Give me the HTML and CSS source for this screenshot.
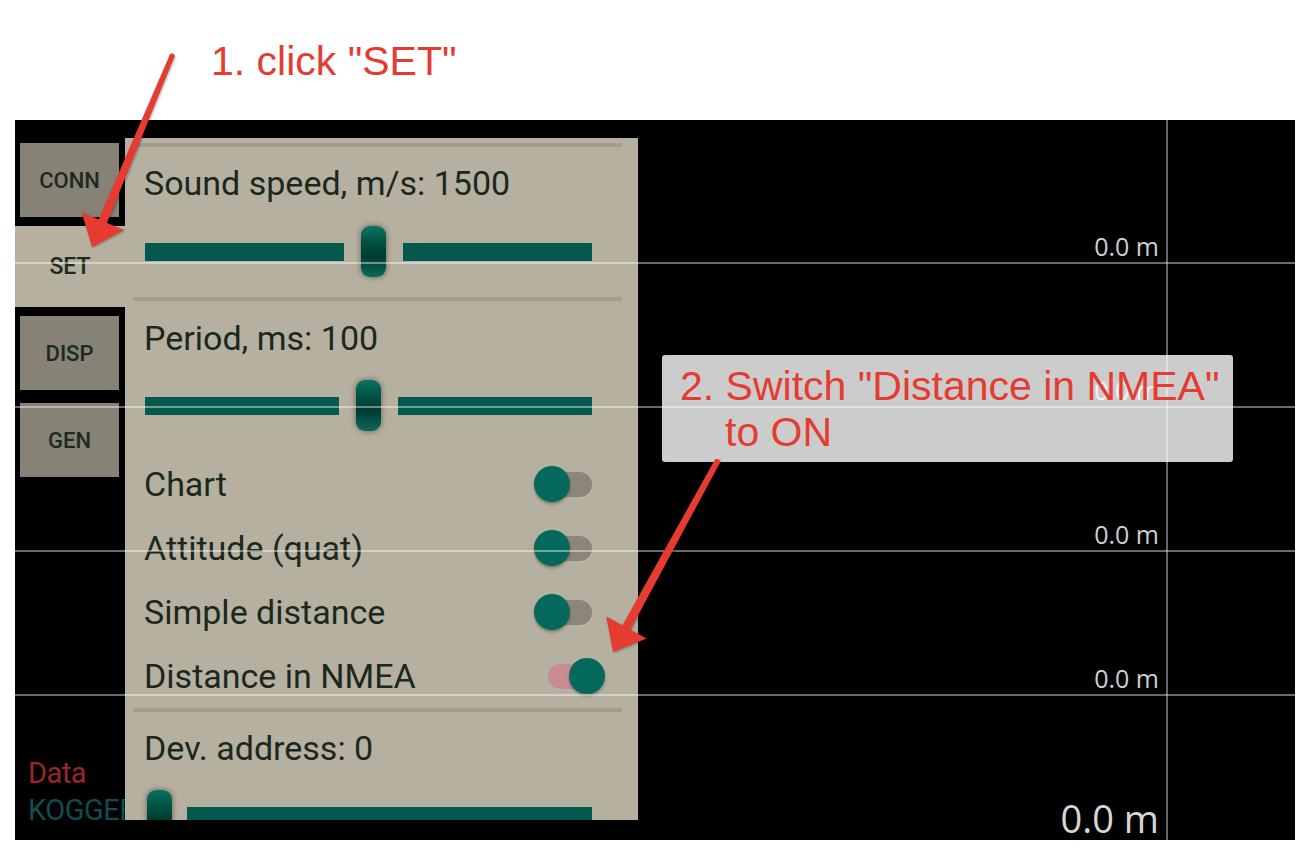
FILE: index.html
```html
<!DOCTYPE html>
<html lang="en">
<head>
<meta charset="utf-8">
<title>KOGGER settings</title>
<link rel="stylesheet" href="styles.css">
</head>
<body>
<div class="page">
  <header class="hint-top">1. click "SET"</header>
  <main class="screen">
    <nav class="tabs">
      <div class="tab">CONN</div>
      <div class="tab active">SET</div>
      <div class="tab">DISP</div>
      <div class="tab gen">GEN</div>
      <div class="brand">
        <span class="brand-data">Data</span>
        <span class="brand-kogger">KOGGER</span>
      </div>
    </nav>

    <section class="panel">
      <div class="divider first"></div>
      <div class="label l-top">Sound speed, m/s: 1500</div>
      <div class="slider s-top">
        <div class="track" style="width:199px"></div>
        <div class="handle"></div>
        <div class="track rest"></div>
      </div>
      <div class="divider second"></div>
      <div class="label l-top2">Period, ms: 100</div>
      <div class="slider s-mid">
        <div class="track" style="width:194px"></div>
        <div class="handle"></div>
        <div class="track rest"></div>
      </div>
      <div class="toggles">
        <div class="toggle-row">
          <span class="label">Chart</span>
          <span class="switch"><span class="sw-track"></span><span class="sw-thumb"></span></span>
        </div>
        <div class="toggle-row">
          <span class="label">Attitude (quat)</span>
          <span class="switch"><span class="sw-track"></span><span class="sw-thumb"></span></span>
        </div>
        <div class="toggle-row">
          <span class="label">Simple distance</span>
          <span class="switch"><span class="sw-track"></span><span class="sw-thumb"></span></span>
        </div>
        <div class="toggle-row">
          <span class="label">Distance in NMEA</span>
          <span class="switch on"><span class="sw-track"></span><span class="sw-thumb"></span></span>
        </div>
      </div>
      <div class="divider third"></div>
      <div class="label l-top3">Dev. address: 0</div>
      <div class="slider s-low at-start">
        <div class="handle"></div>
        <div class="track rest"></div>
      </div>
    </section>

    <div class="grid">
      <div class="grid-row"><span class="val">0.0 m</span></div>
      <div class="grid-row"><span class="val">0.0 m</span></div>
      <div class="grid-row"><span class="val">0.0 m</span></div>
      <div class="grid-row"><span class="val">0.0 m</span></div>
      <div class="grid-row last"><span class="val big">0.0 m</span></div>
    </div>

    <div class="callout">
      <p class="callout-text">2. Switch "Distance in NMEA"<br>to ON</p>
    </div>
  </main>

  <svg class="arrows" width="1311" height="853" viewBox="0 0 1311 853" aria-hidden="true">
    <g class="arrow">
      <circle cx="172" cy="56" r="2.5"/>
      <polygon points="174.3,57 106.2,224.7 97.9,221.3 169.7,55"/>
      <polygon points="92,247 124,230.1 81.6,212.3"/>
    </g>
    <g class="arrow">
      <circle cx="717" cy="462" r="3"/>
      <polygon points="719.6,463.4 629.4,631.4 621.5,627.0 714.4,460.6"/>
      <polygon points="613,652 646.6,638.4 606.2,616.4"/>
    </g>
  </svg>
</div>
</body>
</html>
```

FILE: styles.css
```css
* { box-sizing: border-box; }

html, body {
  margin: 0;
  padding: 0;
  background: #ffffff;
}

.page {
  position: relative;
  width: 1311px;
  height: 853px;
  overflow: hidden;
  font-family: Roboto, "Noto Sans", sans-serif;
}

/* top annotation */
.hint-top {
  height: 120px;
  padding: 38px 0 0 211px;
  font-family: "Liberation Sans", Arial, sans-serif;
  font-size: 41px;
  line-height: 46px;
  color: #e53b30;
  white-space: nowrap;
}

/* device screen */
.screen {
  position: relative;
  margin-left: 15px;
  width: 1280px;
  height: 720px;
  background: #000;
  display: flex;
  align-items: flex-start;
}

/* left tabs */
.tabs {
  width: 110px;
  height: 720px;
  flex: none;
  display: flex;
  flex-direction: column;
  padding-top: 23px;
}

.tab {
  height: 74px;
  margin: 0 6px 0 5px;
  background: #868276;
  color: #1d2a20;
  font-size: 22px;
  font-weight: 500;
  display: flex;
  align-items: center;
  justify-content: center;
}

.tab.active {
  height: 81px;
  margin: 9px 0;
  background: #b6b0a0;
  font-size: 23px;
}

.tab.gen { margin-top: 13px; }

.brand {
  margin-top: auto;
  padding: 0 0 11px 13px;
  display: flex;
  flex-direction: column;
  font-size: 29px;
  line-height: 37px;
  letter-spacing: -0.5px;
  white-space: nowrap;
}
.brand-data { color: #9b2626; }
.brand-kogger { color: #0f4d50; }

/* settings panel */
.panel {
  position: relative;
  z-index: 1;
  width: 513px;
  height: 682px;
  margin-top: 18px;
  flex: none;
  background: #b6b0a0;
  overflow: hidden;
  display: flex;
  flex-direction: column;
}

.divider {
  height: 4px;
  margin: 0 16px 0 8px;
  background: #a29d8d;
  flex: none;
}
.divider.first { margin-top: 5px; }
.divider.second { margin-top: 20px; }
.divider.third { margin-top: 1px; }

.label {
  font-size: 34px;
  line-height: 40px;
  color: #1a281d;
  white-space: nowrap;
}
.panel > .label { margin-left: 19px; }
.l-top { margin-top: 16px; }
.l-top2 { margin-top: 17px; }
.l-top3 { margin-top: 16px; }

.slider {
  height: 51px;
  margin: 0 46px 0 20px;
  display: flex;
  align-items: center;
  gap: 17px;
  flex: none;
}
.s-top { margin-top: 23px; }
.s-mid { margin-top: 22px; }
.s-low { margin-top: 22px; }
.slider.at-start { gap: 15px; padding-left: 2px; }

.track {
  height: 18px;
  background: #03594d;
  flex: none;
}
.track.rest { flex: 1; }

.handle {
  width: 25px;
  height: 51px;
  flex: none;
  border-radius: 9px;
  background: linear-gradient(to bottom, #0b7263 0%, #02503f 35%, #003a31 60%, #0a6a5c 100%);
  box-shadow: 0 0 5px 1px rgba(0, 0, 0, 0.35);
}

/* toggles */
.toggles {
  margin-top: 20px;
  display: flex;
  flex-direction: column;
}

.toggle-row {
  height: 64px;
  padding: 2px 33px 0 19px;
  display: flex;
  align-items: center;
  justify-content: space-between;
}

.switch {
  position: relative;
  width: 71px;
  height: 36px;
  flex: none;
}
.sw-track {
  position: absolute;
  left: 14px;
  top: 6px;
  width: 44px;
  height: 25px;
  border-radius: 13px;
  background: #8b8679;
}
.sw-thumb {
  position: absolute;
  left: 0;
  top: 0;
  width: 36px;
  height: 36px;
  border-radius: 50%;
  background: #04695a;
  box-shadow: 0 2px 3px rgba(0, 0, 0, 0.3);
}
.switch.on .sw-track { background: #c98c95; }
.switch.on .sw-thumb { left: 35px; }

/* chart grid overlay */
.grid {
  position: absolute;
  inset: 0;
  z-index: 2;
  display: flex;
  flex-direction: column;
  pointer-events: none;
  background: linear-gradient(to right,
    transparent 1151px,
    rgba(255, 255, 255, 0.4) 1151px,
    rgba(255, 255, 255, 0.4) 1153px,
    transparent 1153px);
}

.grid-row {
  height: 144px;
  flex: none;
  border-bottom: 2px solid rgba(255, 255, 255, 0.42);
  display: flex;
  align-items: flex-end;
  justify-content: flex-end;
  padding: 0 136px 3px 0;
}
.grid-row.last {
  border-bottom: none;
  padding-bottom: 3px;
}

.val {
  font-family: "Open Sans", "Noto Sans", sans-serif;
  font-size: 25px;
  line-height: 25px;
  color: #cfcfcf;
  white-space: nowrap;
}
.val.big {
  font-size: 38px;
  line-height: 38px;
  color: #d6d6d6;
}

/* second annotation */
.callout {
  position: absolute;
  z-index: 3;
  left: 647px;
  top: 235px;
  width: 571px;
  height: 107px;
  border-radius: 3px;
  background: rgba(255, 255, 255, 0.8);
}

.callout-text {
  margin: 0;
  padding: 8px 0 0 63px;
  text-indent: -45px;
  font-family: "Liberation Sans", Arial, sans-serif;
  font-size: 41px;
  line-height: 46px;
  color: #e53b30;
  white-space: nowrap;
}

/* arrows */
.arrows {
  position: absolute;
  left: 0;
  top: 0;
  z-index: 4;
  pointer-events: none;
}
.arrow {
  fill: #e53b30;
  filter: drop-shadow(1px 1px 1px rgba(0, 0, 0, 0.3));
}
```
